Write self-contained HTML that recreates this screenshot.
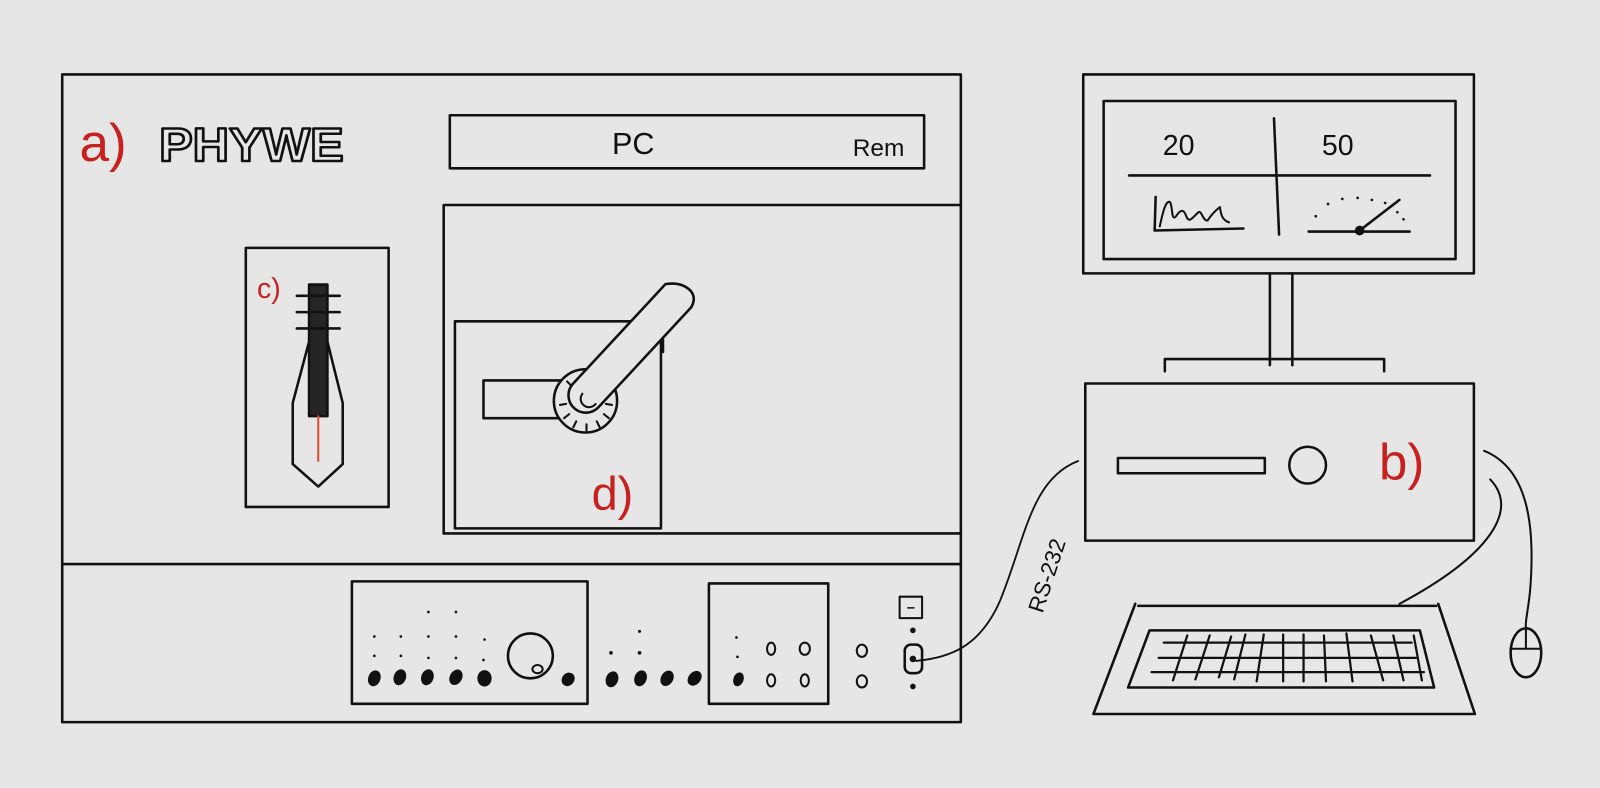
<!DOCTYPE html>
<html><head><meta charset="utf-8"><style>
html,body{margin:0;padding:0;background:#e6e6e6;}
svg{display:block}
text{font-family:"Liberation Sans",sans-serif;}
</style></head><body>
<svg width="1600" height="788" viewBox="0 0 1600 788" xmlns="http://www.w3.org/2000/svg">
<rect width="1600" height="788" fill="#e6e6e6"/>
<g transform="scale(1.02)" stroke="#111" stroke-width="2.5" fill="none" stroke-linecap="round" stroke-linejoin="round">
<!-- main box -->
<rect x="61" y="73" width="881" height="635"/>
<line x1="61" y1="553" x2="942" y2="553"/>
<rect x="441" y="113" width="465" height="52"/>
<polyline points="942,201 435,201 435,523 942,523"/>
<rect x="446" y="315" width="202" height="203"/>
<rect x="241" y="243" width="140" height="254"/>
<!-- labels -->
<text x="78" y="158" font-size="52" fill="#c8201e" stroke="none">a)</text>
<text x="156" y="158" font-size="46" font-weight="bold" fill="#e6e6e6" stroke="#111" stroke-width="2.5" textLength="181" lengthAdjust="spacingAndGlyphs">PHYWE</text>
<text x="600" y="151" font-size="30" fill="#111" stroke="none">PC</text>
<text x="836" y="153" font-size="24" fill="#111" stroke="none">Rem</text>
<!-- syringe -->
<rect x="303" y="279" width="18" height="129" fill="#252525"/>
<line x1="291" y1="290" x2="333" y2="290"/>
<line x1="291" y1="306" x2="333" y2="306"/>
<line x1="291" y1="322" x2="333" y2="322"/>
<polyline points="303,335 287,395 287,455 312,477 336,455 336,395 321,335"/>
<line x1="312" y1="408" x2="312" y2="452" stroke="#e0502a" stroke-width="2"/>
<text x="252" y="292" font-size="28" fill="#c8201e" stroke="none">c)</text>
<!-- d arm -->
<rect x="474" y="373" width="92" height="37"/>
<circle cx="574" cy="393" r="31" fill="#e6e6e6"/>
<g stroke-width="2">
<line x1="549" y1="397" x2="555" y2="396"/><line x1="553" y1="410" x2="558" y2="406"/><line x1="562" y1="419" x2="565" y2="413"/><line x1="575" y1="422" x2="575" y2="416"/><line x1="588" y1="419" x2="585" y2="413"/><line x1="597" y1="410" x2="592" y2="406"/><line x1="600" y1="397" x2="594" y2="396"/><line x1="556" y1="374" x2="560" y2="378"/>
</g>
<path d="M586.6,399.4 L677.6,301.4 Q683,292 677,285 Q668,276 652.4,278.6 L561.4,376.6 A17,17 0 0 0 586.6,399.4 Z" fill="#e6e6e6"/>
<path d="M571,386 A8,8 0 0 0 584,396" stroke-width="2"/>
<line x1="650" y1="333" x2="650" y2="345"/>
<text x="580" y="500" font-size="46" fill="#c8201e" stroke="none">d)</text>
<!-- bottom panel -->
<rect x="345" y="570" width="231" height="120"/>
<rect x="695" y="572" width="117" height="118"/>
<rect x="882" y="585" width="22" height="21" stroke-width="2"/>
<line x1="890" y1="596" x2="896" y2="596" stroke-width="1.5"/>
<rect x="887" y="632" width="17" height="28" rx="6"/>
<circle cx="895" cy="646" r="2" fill="#111"/>
<circle cx="895" cy="618" r="1.5" fill="#111"/>
<circle cx="895" cy="673" r="1.5" fill="#111"/>
<g fill="#111" stroke="none">
<circle cx="420" cy="600" r="1.3"/><circle cx="447" cy="600" r="1.3"/>
<circle cx="367" cy="624" r="1.3"/><circle cx="393" cy="624" r="1.3"/><circle cx="420" cy="624" r="1.3"/><circle cx="447" cy="624" r="1.3"/><circle cx="475" cy="627" r="1.3"/>
<circle cx="367" cy="643" r="1.3"/><circle cx="393" cy="643" r="1.3"/><circle cx="420" cy="645" r="1.3"/><circle cx="447" cy="645" r="1.3"/><circle cx="474" cy="647" r="1.3"/>
<ellipse cx="367" cy="665" rx="6" ry="8" transform="rotate(20 367 665)"/>
<ellipse cx="392" cy="664" rx="6" ry="8" transform="rotate(20 392 664)"/>
<ellipse cx="419" cy="664" rx="6" ry="8" transform="rotate(20 419 664)"/>
<ellipse cx="447" cy="664" rx="6" ry="8" transform="rotate(30 447 664)"/>
<ellipse cx="475" cy="665" rx="7" ry="8"/>
<ellipse cx="557" cy="666" rx="6" ry="7" transform="rotate(40 557 666)"/>
<circle cx="627" cy="619" r="1.5"/><circle cx="599" cy="640" r="1.8"/><circle cx="627" cy="640" r="1.8"/>
<ellipse cx="600" cy="666" rx="6" ry="8" transform="rotate(20 600 666)"/>
<ellipse cx="628" cy="665" rx="6" ry="8" transform="rotate(20 628 665)"/>
<ellipse cx="654" cy="665" rx="6" ry="8" transform="rotate(30 654 665)"/>
<ellipse cx="681" cy="665" rx="6" ry="8" transform="rotate(40 681 665)"/>
<circle cx="722" cy="625" r="1.3"/><circle cx="723" cy="644" r="1.3"/>
<ellipse cx="724" cy="666" rx="5" ry="7" transform="rotate(20 724 666)"/>
</g>
<circle cx="520" cy="643" r="22"/>
<ellipse cx="527" cy="656" rx="5" ry="4" stroke-width="2"/>
<ellipse cx="756" cy="636" rx="4" ry="6" stroke-width="2"/>
<ellipse cx="789" cy="636" rx="5" ry="6" stroke-width="2"/>
<ellipse cx="756" cy="667" rx="4" ry="6" stroke-width="2"/>
<ellipse cx="789" cy="667" rx="4" ry="6" stroke-width="2"/>
<ellipse cx="845" cy="638" rx="5" ry="6" stroke-width="2"/>
<ellipse cx="845" cy="668" rx="5" ry="6" stroke-width="2"/>
<!-- cable RS-232 -->
<path d="M1057,452 C1010,470 1005,530 980,590 C960,635 930,645 898,648" stroke-width="1.8"/>
<text x="0" y="0" font-size="22" fill="#111" stroke="none" transform="translate(1022,602) rotate(-72)">RS-232</text>
<!-- monitor -->
<rect x="1062" y="73" width="383" height="195"/>
<rect x="1082" y="99" width="345" height="155"/>
<line x1="1249" y1="116" x2="1254" y2="230"/>
<line x1="1107" y1="172" x2="1402" y2="172"/>
<text x="1140" y="152" font-size="28" fill="#111" stroke="none">20</text>
<text x="1296" y="152" font-size="28" fill="#111" stroke="none">50</text>
<path d="M1133,193 L1132,226 L1219,224" />
<path d="M1137,222 C1140,208 1143,196 1147,198 C1150,202 1148,218 1153,212 C1158,204 1161,206 1163,212 C1166,220 1170,212 1175,208 C1178,206 1180,218 1184,216 C1188,210 1192,206 1196,203 C1197,210 1198,216 1205,218" stroke-width="2"/>
<line x1="1283" y1="227" x2="1382" y2="227"/>
<line x1="1333" y1="226" x2="1372" y2="196"/>
<circle cx="1333" cy="226" r="3.5" fill="#111"/>
<g fill="#111" stroke="none"><circle cx="1290" cy="212" r="1.3"/><circle cx="1302" cy="200" r="1.3"/><circle cx="1316" cy="195" r="1.3"/><circle cx="1331" cy="194" r="1.3"/><circle cx="1345" cy="196" r="1.3"/><circle cx="1358" cy="199" r="1.3"/><circle cx="1370" cy="208" r="1.3"/><circle cx="1376" cy="215" r="1.3"/></g>
<line x1="1245" y1="268" x2="1245" y2="358"/>
<line x1="1267" y1="268" x2="1267" y2="358"/>
<polyline points="1142,364 1142,352 1357,352 1357,364"/>
<!-- pc -->
<rect x="1064" y="376" width="381" height="154"/>
<rect x="1096" y="449" width="144" height="15"/>
<circle cx="1282" cy="456" r="18"/>
<text x="1352" y="470" font-size="50" fill="#c8201e" stroke="none">b)</text>
<!-- cables right -->
<path d="M1455,442 C1500,460 1505,520 1500,580 C1498,600 1495,610 1496,615" stroke-width="2"/>
<path d="M1461,470 C1490,500 1460,545 1372,592" stroke-width="2"/>
<!-- mouse -->
<ellipse cx="1496" cy="640" rx="15" ry="24"/>
<line x1="1481" y1="636" x2="1511" y2="636" stroke-width="2"/>
<line x1="1496" y1="616" x2="1496" y2="636" stroke-width="2"/>
<!-- keyboard -->
<g transform="translate(-4,26)">
<polyline points="1117,566 1076,674 1450,674 1414,566"/>
<line x1="1120" y1="568" x2="1412" y2="568"/>
<polygon points="1131,592 1396,592 1410,648 1110,648"/>
<g stroke-width="2.2">
<line x1="1145" y1="604" x2="1388" y2="604"/>
<line x1="1140" y1="619" x2="1393" y2="619"/>
<line x1="1133" y1="633" x2="1400" y2="633"/>
<line x1="1168" y1="597" x2="1154" y2="641"/>
<line x1="1190" y1="597" x2="1176" y2="640"/>
<line x1="1211" y1="598" x2="1199" y2="638"/>
<line x1="1225" y1="596" x2="1214" y2="640"/>
<line x1="1243" y1="596" x2="1236" y2="642"/>
<line x1="1262" y1="596" x2="1262" y2="642"/>
<line x1="1282" y1="596" x2="1282" y2="642"/>
<line x1="1302" y1="597" x2="1304" y2="642"/>
<line x1="1324" y1="595" x2="1330" y2="642"/>
<line x1="1348" y1="597" x2="1360" y2="641"/>
<line x1="1370" y1="597" x2="1380" y2="641"/>
<line x1="1390" y1="597" x2="1398" y2="641"/>
</g>
</g>
</g>
</svg>
</body></html>
